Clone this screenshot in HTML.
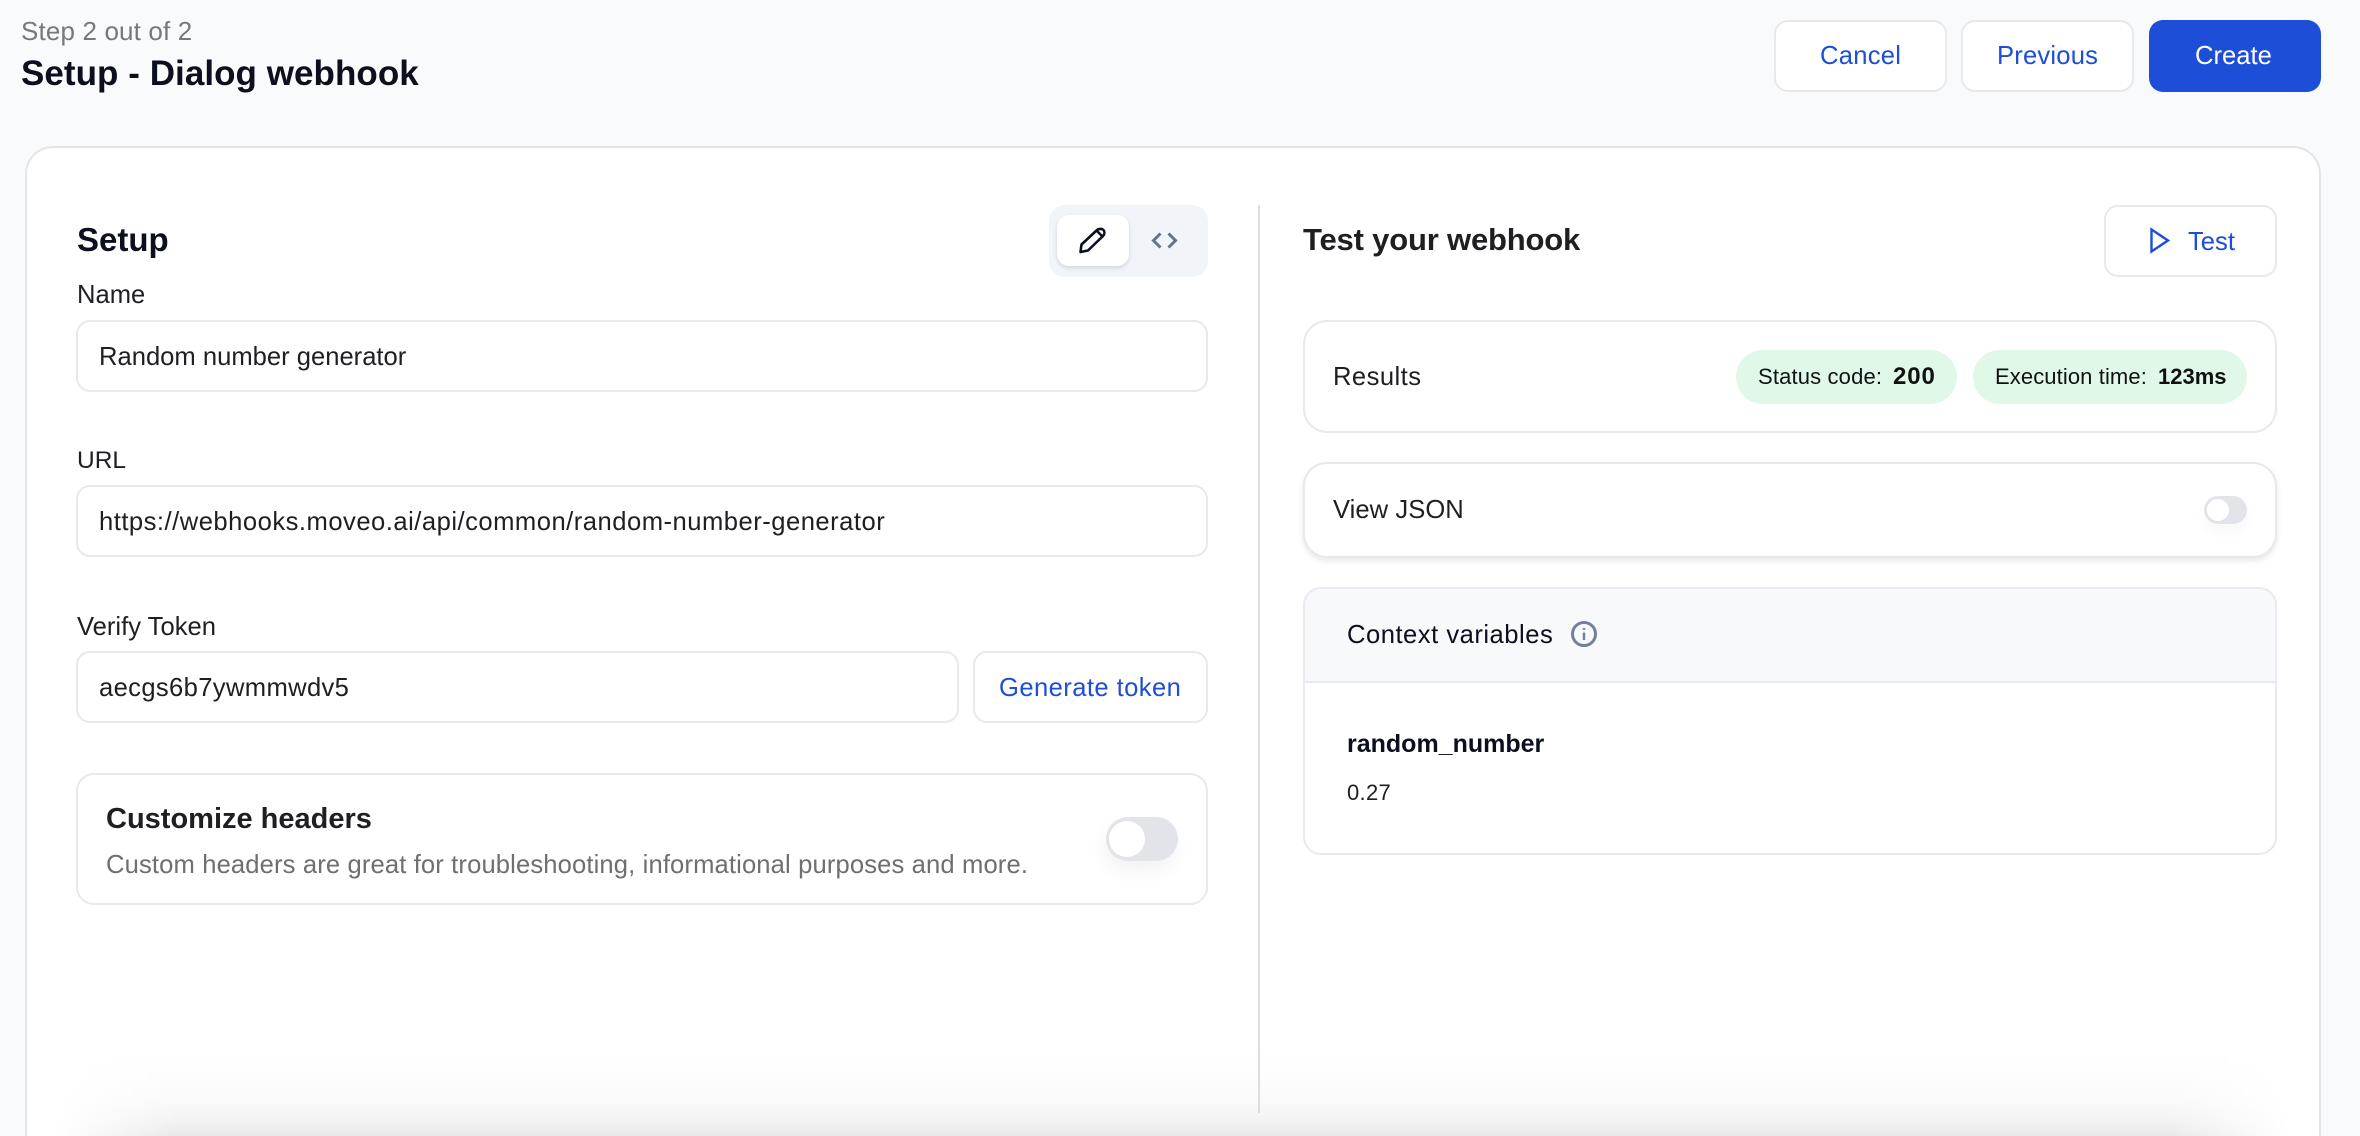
<!DOCTYPE html>
<html lang="en">
<head>
<meta charset="utf-8">
<title>Setup - Dialog webhook</title>
<style>
*{box-sizing:border-box;margin:0;padding:0}
html,body{width:2360px;height:1136px;overflow:hidden;background:#f9fafc;font-family:"Liberation Sans",sans-serif;color:#1f1f23}
#page{position:absolute;left:0;top:0;width:2360px;height:1136px;overflow:hidden}
.abs,.t,.box{position:absolute}
.t{white-space:nowrap;line-height:40px;height:40px;font-size:25.6px}
.box{background:#fff;border:2px solid #e8e9ec;border-radius:14px}
.blue{color:#1d4ed8}
.b{font-weight:700}
svg{position:absolute;display:block;overflow:visible}
.card{position:absolute;left:25px;top:146px;width:2296px;height:990px;background:#fff;border:2px solid #e4e5e8;border-bottom:0;border-radius:28px 28px 0 0}
.shade{position:absolute;left:27px;top:1046px;width:2292px;height:90px;background:linear-gradient(to bottom,rgba(0,0,0,0) 0%,rgba(0,0,0,.006) 35%,rgba(0,0,0,.02) 60%,rgba(0,0,0,.05) 85%,rgba(0,0,0,.085) 100%);-webkit-mask-image:linear-gradient(to right,transparent 30px,#000 150px,#000 calc(100% - 150px),transparent calc(100% - 30px));mask-image:linear-gradient(to right,transparent 30px,#000 150px,#000 calc(100% - 150px),transparent calc(100% - 30px))}
.pill{position:absolute;background:#e0f8e8;border-radius:27px;top:350px;height:54px}
.sw{position:absolute;background:#e3e4e9;border-radius:30px}
.knob{position:absolute;background:#fff;border-radius:50%}
</style>
</head>
<body>
<div id="page">
<div class="t" style="left:21px;top:11px;color:#77777c;letter-spacing:.15px;font-size:26px">Step 2 out of 2</div>
<div class="t b" style="left:21px;top:54px;font-size:35px;color:#0b0f1e;letter-spacing:.05px">Setup - Dialog webhook</div>

<div class="box" style="left:1774px;top:20px;width:173px;height:72px"></div>
<div class="t blue" style="left:1820px;top:36px;letter-spacing:.26px">Cancel</div>
<div class="box" style="left:1961px;top:20px;width:173px;height:72px"></div>
<div class="t blue" style="left:1997px;top:36px;letter-spacing:.2px">Previous</div>
<div class="abs" style="left:2149px;top:20px;width:172px;height:72px;background:#1d4ed8;border-radius:14px"></div>
<div class="t" style="left:2195px;top:36px;color:#fff">Create</div>

<div class="card"></div>
<div class="shade"></div>

<div class="t b" style="left:77px;top:220px;font-size:33px;color:#0b0f1e">Setup</div>

<div class="abs" style="left:1049px;top:205px;width:159px;height:72px;background:#f1f4f9;border-radius:16px"></div>
<div class="abs" style="left:1057px;top:215px;width:72px;height:51px;background:#fff;border-radius:12px;box-shadow:0 2px 4px rgba(20,30,60,.14)"></div>
<svg style="left:1079px;top:227px" width="27" height="26" viewBox="0 0 27 26" fill="none" stroke="#0b0f1e" stroke-width="2.6" stroke-linejoin="round" stroke-linecap="round">
<path d="M1.5 25 L2.5 17.5 L17.5 3.5 C19.5 1.5 23 1.5 24.5 3 C26 5 25.5 7.5 24 9 L9 23.5 Z"/>
<path d="M18 4 L23.5 9.5"/>
</svg>
<svg style="left:1152px;top:233px" width="25" height="15" viewBox="0 0 25 15" fill="none" stroke="#64748b" stroke-width="3" stroke-linejoin="miter">
<path d="M8.5 .5 L1.5 7.5 L8.5 14.5"/>
<path d="M16.5 .5 L23.5 7.5 L16.5 14.5"/>
</svg>

<div class="t" style="left:77px;top:275px">Name</div>
<div class="box" style="left:76px;top:320px;width:1132px;height:72px"></div>
<div class="t" style="left:99px;top:337px">Random number generator</div>

<div class="t" style="left:77px;top:441px;font-size:24.5px">URL</div>
<div class="box" style="left:76px;top:485px;width:1132px;height:72px"></div>
<div class="t" style="left:99px;top:502px;letter-spacing:.49px">https://webhooks.moveo.ai/api/common/random-number-generator</div>

<div class="t" style="left:77px;top:607px">Verify Token</div>
<div class="box" style="left:76px;top:651px;width:883px;height:72px"></div>
<div class="t" style="left:99px;top:668px;letter-spacing:.35px">aecgs6b7ywmmwdv5</div>
<div class="box" style="left:973px;top:651px;width:235px;height:72px"></div>
<div class="t blue" style="left:999px;top:668px;letter-spacing:.42px">Generate token</div>

<div class="box" style="left:76px;top:773px;width:1132px;height:132px;border-radius:18px"></div>
<div class="t b" style="left:106px;top:799px;font-size:29px">Customize headers</div>
<div class="t" style="left:106px;top:845px;color:#6e6e73;letter-spacing:.13px">Custom headers are great for troubleshooting, informational purposes and more.</div>
<div class="sw" style="left:1106px;top:817px;width:72px;height:44px;box-shadow:-2px 10px 18px rgba(0,0,0,.05)"></div>
<div class="knob" style="left:1109px;top:821px;width:36px;height:36px"></div>

<div class="abs" style="left:1258px;top:205px;width:2px;height:908px;background:#dcdde0"></div>

<div class="t b" style="left:1303px;top:220px;font-size:31px;letter-spacing:-.18px">Test your webhook</div>
<div class="box" style="left:2104px;top:205px;width:173px;height:72px"></div>
<svg style="left:2150px;top:228px" width="20" height="25" viewBox="0 0 20 25" fill="none" stroke="#1d4ed8" stroke-width="2.4">
<path d="M1.5 1.5 L18 12.5 L1.5 23.5 Z"/>
</svg>
<div class="t blue" style="left:2188px;top:222px">Test</div>

<div class="box" style="left:1303px;top:320px;width:974px;height:113px;border-radius:24px"></div>
<div class="t" style="left:1333px;top:357px;letter-spacing:.45px">Results</div>
<div class="pill" style="left:1736px;width:221px"></div>
<div class="t" style="left:1758px;top:357px;font-size:22px;color:#111;letter-spacing:.15px">Status code:</div>
<div class="t b" style="left:1893px;top:357px;font-size:24px;color:#111;letter-spacing:.9px">200</div>
<div class="pill" style="left:1973px;width:274px"></div>
<div class="t" style="left:1995px;top:357px;font-size:22px;color:#111;letter-spacing:.1px">Execution time:</div>
<div class="t b" style="left:2158px;top:357px;font-size:22px;color:#111">123ms</div>

<div class="box" style="left:1303px;top:462px;width:974px;height:96px;border-radius:24px;box-shadow:0 3px 6px rgba(0,0,0,.09)"></div>
<div class="t" style="left:1333px;top:490px;letter-spacing:.05px">View JSON</div>
<div class="sw" style="left:2204px;top:496px;width:43px;height:28px;box-shadow:0 8px 14px rgba(0,0,0,.03)"></div>
<div class="knob" style="left:2207px;top:499px;width:22px;height:22px"></div>

<div class="box" style="left:1303px;top:587px;width:974px;height:268px;border-radius:18px;border-color:#e8eaf0;overflow:hidden">
<div class="abs" style="left:0;top:0;width:100%;height:94px;background:#f8f9fb;border-bottom:2px solid #e6e9f0"></div>
</div>
<div class="t" style="left:1347px;top:615px;color:#0b0f1e;letter-spacing:.5px">Context variables</div>
<svg style="left:1571px;top:621px" width="26" height="26" viewBox="0 0 26 26" fill="none" stroke="#72819c" stroke-width="3">
<circle cx="13" cy="13" r="11.5"/>
<path d="M13 11.5 V19" stroke-width="2.4"/>
<path d="M13 7 V8.8" stroke-width="2.4"/>
</svg>
<div class="t b" style="left:1347px;top:724px;font-size:25px;color:#0b0f1e">random_number</div>
<div class="t" style="left:1347px;top:773px;font-size:22px;letter-spacing:.3px">0.27</div>
</div>
</body>
</html>
